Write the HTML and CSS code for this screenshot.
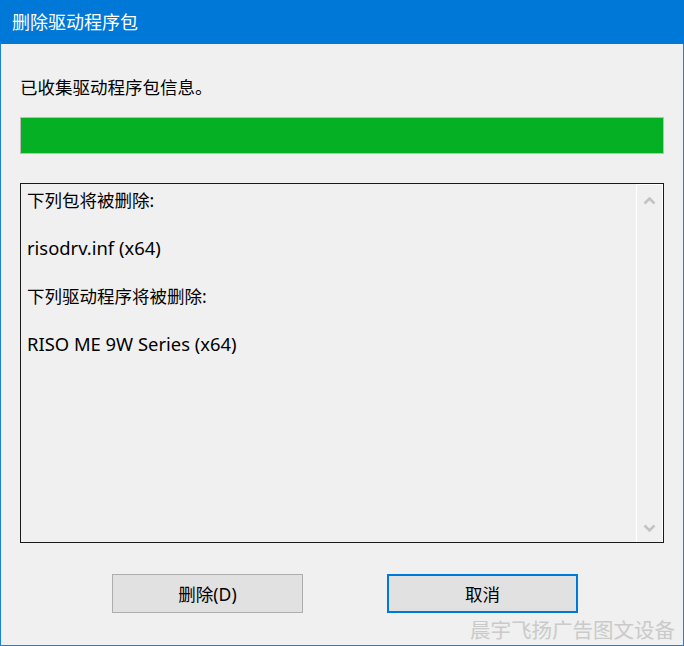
FILE: index.html
```html
<!DOCTYPE html>
<html lang="zh-CN">
<head>
<meta charset="utf-8">
<title>删除驱动程序包</title>
<link rel="stylesheet" href="styles.css">
</head>
<body>
<div class="window">
  <div class="titlebar">删除驱动程序包</div>
  <div class="content">
    <div class="status">已收集驱动程序包信息。</div>
    <div class="progress"><div class="progress-fill"></div></div>
    <div class="listbox">
      <div class="list-text">
        <div class="line">下列包将被删除:</div>
        <div class="line">&nbsp;</div>
        <div class="line latin">risodrv.inf (x64)</div>
        <div class="line">&nbsp;</div>
        <div class="line">下列驱动程序将被删除:</div>
        <div class="line">&nbsp;</div>
        <div class="line latin">RISO ME 9W Series (x64)</div>
      </div>
      <div class="scrollbar">
        <svg class="arrow" width="13" height="9" viewBox="0 0 13 9"><polyline points="1.5,7.5 6.5,2.5 11.5,7.5" fill="none" stroke="#c3c3c3" stroke-width="2.6"/></svg>
        <svg class="arrow" width="13" height="9" viewBox="0 0 13 9"><polyline points="1.5,1.5 6.5,6.5 11.5,1.5" fill="none" stroke="#c3c3c3" stroke-width="2.6"/></svg>
      </div>
    </div>
    <div class="buttons">
      <button class="btn">删除(D)</button>
      <button class="btn btn-default">取消</button>
    </div>
  </div>
  <div class="watermark">晨宇飞扬广告图文设备</div>
</div>
</body>
</html>
```
FILE: styles.css
```css
html, body {
  margin: 0;
  padding: 0;
  background: #f0f0f0;
}
body {
  width: 684px;
  height: 646px;
  overflow: hidden;
  font-family: "Noto Sans", "Noto Sans CJK SC", sans-serif;
  color: #000;
}
.window {
  position: relative;
  box-sizing: border-box;
  width: 684px;
  height: 646px;
  border: 1px solid #1883d7;
  border-top: none;
  background: #f0f0f0;
}
.titlebar {
  height: 44px;
  margin: 0 -1px;
  background: #0078d7;
  color: #fff;
  font-size: 18px;
  line-height: 44px;
  padding-left: 12px;
}
.content {
  padding: 31px 19px 0 19px;
}
.status {
  font-size: 17.5px;
  line-height: 24px;
  height: 24px;
}
.progress {
  margin-top: 18px;
  height: 35px;
  border: 1px solid #bcbcbc;
  background: #e6e6e6;
}
.progress-fill {
  height: 100%;
  width: 100%;
  background: #06b025;
}
.listbox {
  margin-top: 29px;
  height: 358px;
  border: 1px solid #1a1a1a;
  display: flex;
  background: #f0f0f0;
}
.list-text {
  flex: 1;
  padding: 4px 0 0 6px;
  font-size: 17.5px;
  line-height: 24px;
}
.line {
  height: 24px;
}
.latin {
  font-size: 18.4px;
}
.scrollbar {
  width: 25px;
  border-left: 1px solid #ffffff;
  border-right: 1px solid #ffffff;
  border-top: 1px solid #ffffff;
  display: flex;
  flex-direction: column;
  justify-content: space-between;
  align-items: center;
  padding: 11px 0 9px 0;
}
.arrow {
  display: block;
}
.buttons {
  display: flex;
  gap: 84px;
  padding-left: 92px;
  margin-top: 31px;
}
.btn {
  box-sizing: border-box;
  width: 191px;
  height: 39px;
  border: 1px solid #adadad;
  background: #e1e1e1;
  font-family: "Noto Sans", "Noto Sans CJK SC", sans-serif;
  font-size: 17.5px;
  color: #000;
  padding: 0;
}
.btn-default {
  border: 2px solid #0078d7;
}
.watermark {
  position: absolute;
  left: 469px;
  top: 616px;
  font-family: "Noto Sans CJK SC", sans-serif;
  font-size: 20.5px;
  line-height: 26px;
  color: #cacaca;
  white-space: nowrap;
}
```
